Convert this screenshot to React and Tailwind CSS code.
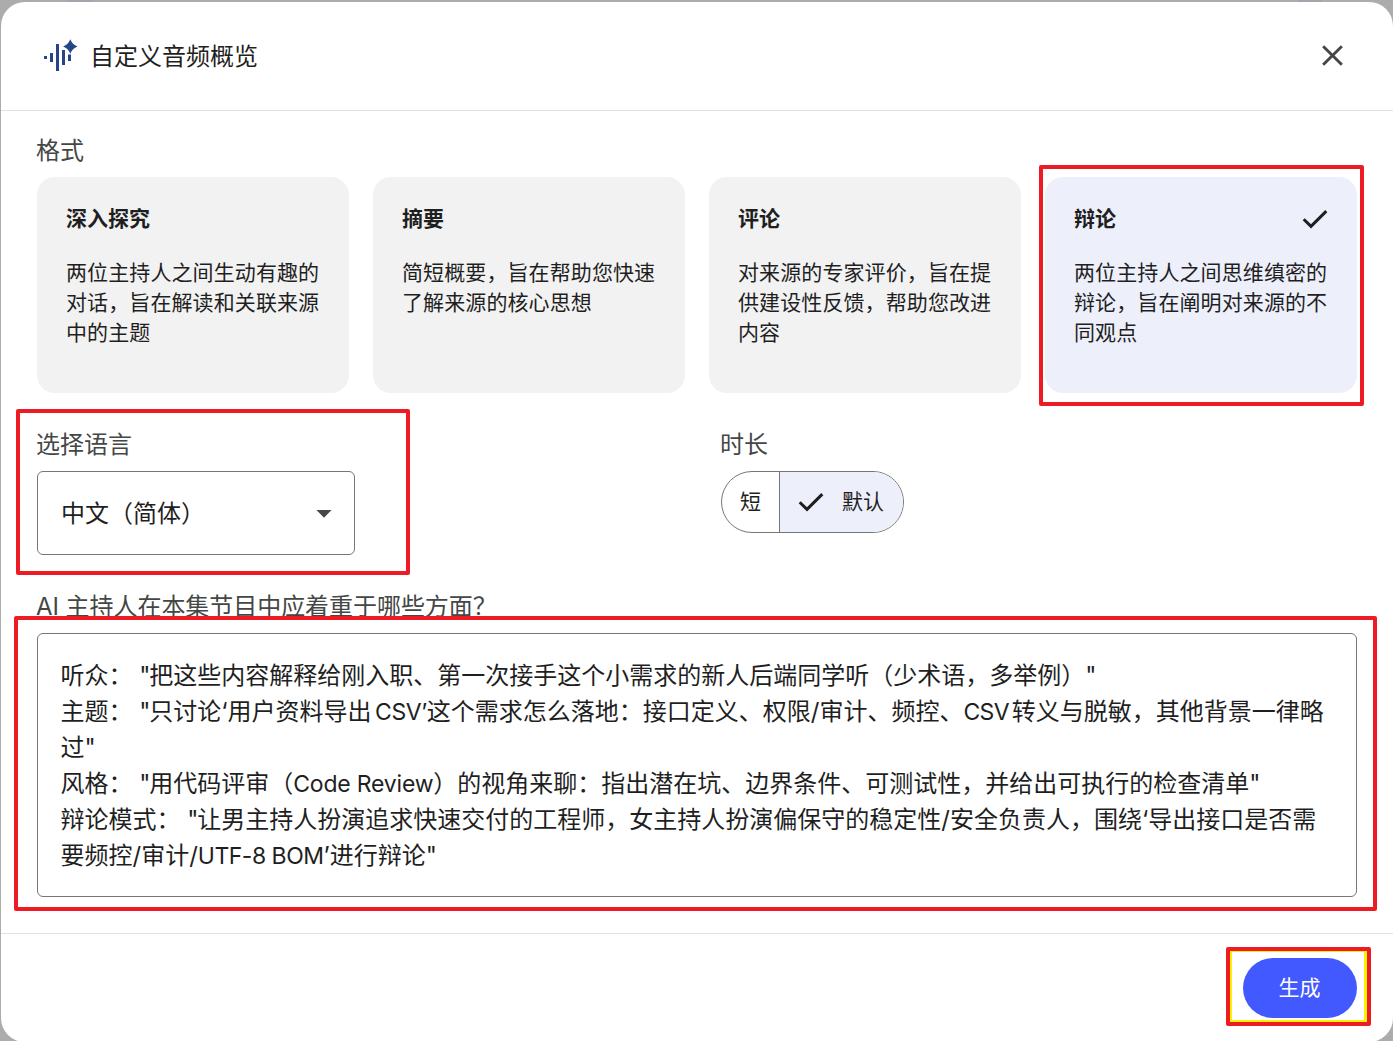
const FONT = 'font-["Inter","Noto_Sans_CJK_SC",sans-serif]';

const formats = [
  { title: "深入探究", lines: ["两位主持人之间生动有趣的", "对话，旨在解读和关联来源", "中的主题"] },
  { title: "摘要", lines: ["简短概要，旨在帮助您快速", "了解来源的核心思想"] },
  { title: "评论", lines: ["对来源的专家评价，旨在提", "供建设性反馈，帮助您改进", "内容"] },
  { title: "辩论", lines: ["两位主持人之间思维缜密的", "辩论，旨在阐明对来源的不", "同观点"], selected: true },
];

const promptLines = [
  "听众： \"把这些内容解释给刚入职、第一次接手这个小需求的新人后端同学听（少术语，多举例）\"",
  "主题： \"只讨论‘用户资料导出CSV’这个需求怎么落地：接口定义、权限/审计、频控、CSV转义与脱敏，其他背景一律略",
  "过\"",
  "风格： \"用代码评审（Code Review）的视角来聊：指出潜在坑、边界条件、可测试性，并给出可执行的检查清单\"",
  "辩论模式： \"让男主持人扮演追求快速交付的工程师，女主持人扮演偏保守的稳定性/安全负责人，围绕‘导出接口是否需",
  "要频控/审计/UTF-8 BOM’进行辩论\"",
];

const runStyles = {
  "CSV’": "ml-[3.5px] text-[23px] tracking-[-0.4px]",
  CSV: "text-[23px] tracking-[-0.7px] mr-[3px]",
  "Code Review": "text-[23px] tracking-[-0.2px]",
  "UTF-8 BOM": "text-[23px] tracking-[-0.5px]",
  '"': "tracking-[-1.2px]",
};

function PromptLine({ text }) {
  return (
    <div className="h-9 whitespace-pre">
      {text.split(/(CSV’|CSV|Code Review|UTF-8 BOM|")/).map((part, i) =>
        runStyles[part] ? <span key={i} className={runStyles[part]}>{part}</span> : part
      )}
    </div>
  );
}

function AudioIcon() {
  return (
    <svg className="h-9 w-9" viewBox="0 0 36 36" fill="#264588">
      <path d="M2 18h3v3H2zM8 15h3v9H8zM14 6h3v27h-3zM20 12h3v15h-3zM26 16.5h3V23h-3z" />
      <path d="M28.3 1.3 Q30.3 6.5 35.5 8.5 Q30.3 10.5 28.3 15.7 Q26.3 10.5 21.1 8.5 Q26.3 6.5 28.3 1.3Z" />
    </svg>
  );
}

function Check({ className }) {
  return (
    <svg className={className} viewBox="0 0 26 20" fill="none" stroke="currentColor" strokeWidth="3">
      <path d="M1.7 10.2 9 17.4 24.3 2.1" />
    </svg>
  );
}

function Card({ title, lines, selected }) {
  return (
    <div className={`h-[216px] rounded-[18px] px-[29px] pt-[27px] text-[21px] leading-[30px] text-[#1f1f1f] ${selected ? "bg-[#edeffb]" : "bg-[#f2f2f2]"}`}>
      <div className="flex items-center justify-between font-bold">
        <span>{title}</span>
        {selected && <Check className="mr-[0.5px] h-5 w-[26px]" />}
      </div>
      <div className="mt-6 tracking-[0.1px]">
        {lines.map((line) => (
          <div key={line} className="whitespace-nowrap">{line}</div>
        ))}
      </div>
    </div>
  );
}

function Label({ children }) {
  return <h2 className="-ml-px h-[45px] pt-px text-[#444746]">{children}</h2>;
}

export default function App() {
  return (
    <div lang="zh-CN" className={`relative h-[1041px] w-[1393px] overflow-hidden bg-[#acacac] pl-px pt-0.5 text-[24px] leading-9 text-[#1f1f1f] ${FONT}`}>
      <div className="flex h-[1040px] w-[1392px] flex-col rounded-[24px] bg-white">
        <header className="flex h-[109px] shrink-0 items-center justify-between border-b border-[#dbe0ea] pl-[41px] pr-[50px]">
          <div className="flex items-center gap-3">
            <AudioIcon />
            <h1 className="pt-px">自定义音频概览</h1>
          </div>
          <svg className="mb-px h-[21px] w-[21px]" viewBox="0 0 22 22" fill="none" stroke="#444746" strokeWidth="3">
            <path d="M1.2 1.2 20.8 20.8M20.8 1.2 1.2 20.8" />
          </svg>
        </header>

        <main className="flex h-[823px] shrink-0 flex-col border-b border-[#e0e1eb] px-9 pt-[21px]">
          <Label>格式</Label>
          <div className="grid w-[1320px] grid-cols-[312px_312px_312px_312px] gap-6">
            {formats.map((f) => <Card key={f.title} {...f} />)}
          </div>

          <div className="mt-[33px] flex h-[129px]">
            <div className="w-[684px]">
              <Label>选择语言</Label>
              <div className="flex h-[84px] w-[318px] items-center justify-between rounded-[6px] border border-[#747775] pl-[23px] pr-[22px] pt-px">
                <span>中文（简体）</span>
                <svg className="h-2 w-4" viewBox="0 0 16 8" fill="#444746"><path d="M.5 0h15L8 7.7z" /></svg>
              </div>
            </div>
            <div>
              <Label>时长</Label>
              <div className="flex h-[62px] w-[183px] overflow-hidden rounded-full border border-[#747775] text-[21px]">
                <div className="flex w-[58px] items-center justify-center border-r border-[#747775]">短</div>
                <div className="flex flex-1 items-center bg-[#edeffb] pl-[18px]">
                  <Check className="h-5 w-[26px]" />
                  <span className="ml-[18px]">默认</span>
                </div>
              </div>
            </div>
          </div>

          <div className="mt-[33px] tracking-[-0.05px]">
            <Label>AI 主持人在本集节目中应着重于哪些方面？</Label>
          </div>
          <div className="h-[264px] w-[1320px] rounded-[6px] border border-[#747775] px-[22.5px] pt-6">
            {promptLines.map((line) => <PromptLine key={line} text={line} />)}
          </div>
        </main>

        <footer className="flex justify-end pr-9 pt-6">
          <button className="h-[60px] w-[114px] rounded-full bg-[#4259ff] pr-px text-[21px] text-white">生成</button>
        </footer>
      </div>

      <div className="absolute left-[68px] top-0 h-0.5 w-6 bg-[#a4a3ae]" />
      <div className="absolute left-[1298px] top-0 h-0.5 w-6 bg-[#a4a3ae]" />

      <div className="absolute left-[1039px] top-[165px] h-[241px] w-[325px] rounded-[2px] border-4 border-[#ed1c24]" />
      <div className="absolute left-4 top-[409px] h-[166px] w-[394px] rounded-[2px] border-4 border-[#ed1c24]" />
      <div className="absolute left-[14px] top-[616px] h-[295px] w-[1363px] rounded-[2px] border-4 border-[#ed1c24]" />
      <div className="absolute left-[1226px] top-[947px] h-[79px] w-[145px] rounded-[2px] border-4 border-[#ed1c24]">
        <div className="h-full w-full border-b-2 border-l-2 border-r-[3px] border-t border-[#fff200]" />
      </div>
    </div>
  );
}
